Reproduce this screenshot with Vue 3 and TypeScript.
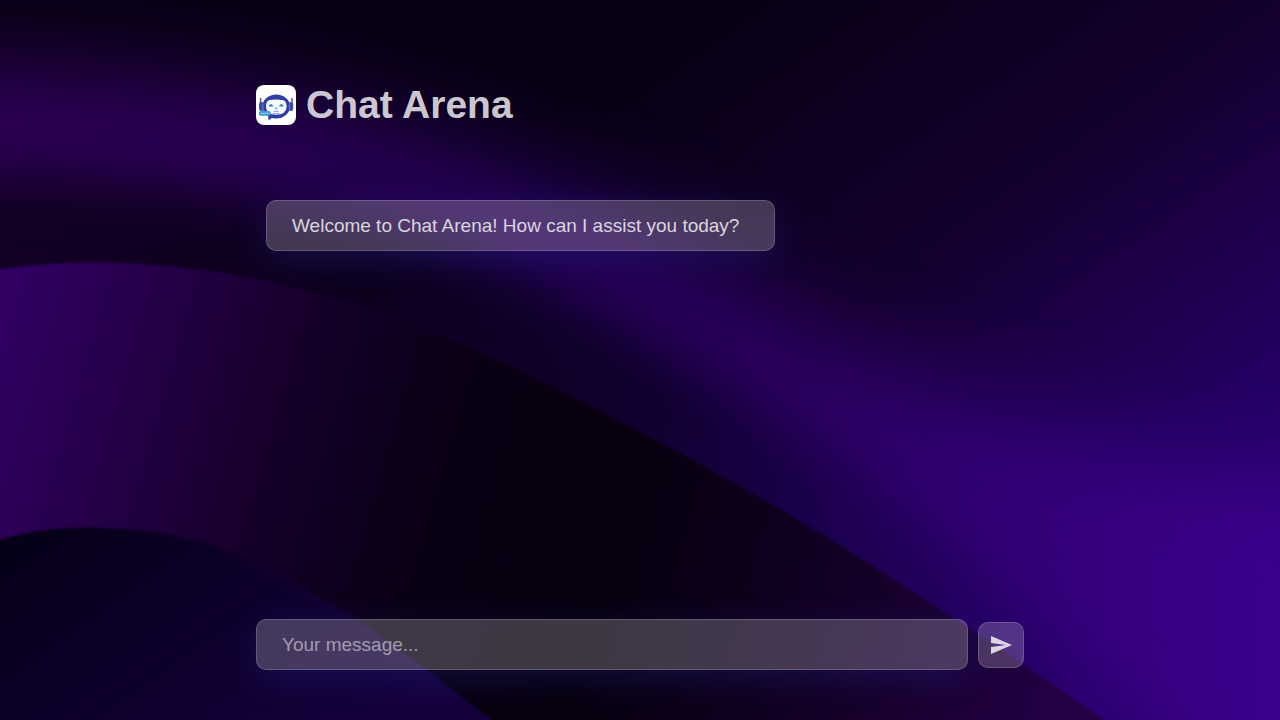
<script setup lang="ts">
import { ref } from 'vue'

interface Message {
  id: number
  text: string
}

const messages = ref<Message[]>([
  { id: 1, text: 'Welcome to Chat Arena! How can I assist you today?' },
])
const draft = ref('')

function send(): void {
  const text = draft.value.trim()
  if (!text) return
  messages.value.push({ id: messages.value.length + 1, text })
  draft.value = ''
}
</script>

<template>
  <div class="app">
    <svg class="backdrop" viewBox="0 0 1280 720" preserveAspectRatio="xMidYMid slice" aria-hidden="true">
      <defs>
        <linearGradient id="sky" gradientUnits="userSpaceOnUse" x1="620" y1="80" x2="1100" y2="760">
          <stop offset="0" stop-color="#080014" />
          <stop offset="0.38" stop-color="#14002d" />
          <stop offset="0.75" stop-color="#240064" />
          <stop offset="1" stop-color="#330082" />
        </linearGradient>
        <linearGradient id="ribbon" gradientUnits="userSpaceOnUse" x1="0" y1="0" x2="1280" y2="0">
          <stop offset="0" stop-color="#2f0058" />
          <stop offset="0.4" stop-color="#260059" />
          <stop offset="0.6" stop-color="#2b0060" />
          <stop offset="0.8" stop-color="#330078" />
          <stop offset="1" stop-color="#3c008e" />
        </linearGradient>
        <linearGradient id="trough" gradientUnits="userSpaceOnUse" x1="0" y1="200" x2="1100" y2="720">
          <stop offset="0" stop-color="#140024" />
          <stop offset="0.3" stop-color="#0d001e" />
          <stop offset="0.55" stop-color="#11002e" />
          <stop offset="0.75" stop-color="#1d0052" />
          <stop offset="1" stop-color="#2a0070" />
        </linearGradient>
        <linearGradient id="wave" gradientUnits="userSpaceOnUse" x1="0" y1="340" x2="1070" y2="650">
          <stop offset="0" stop-color="#300062" />
          <stop offset="0.12" stop-color="#250048" />
          <stop offset="0.26" stop-color="#16002a" />
          <stop offset="0.42" stop-color="#0a0014" />
          <stop offset="0.58" stop-color="#07000f" />
          <stop offset="0.78" stop-color="#130024" />
          <stop offset="1" stop-color="#230044" />
        </linearGradient>
        <linearGradient id="front" gradientUnits="userSpaceOnUse" x1="60" y1="520" x2="260" y2="800">
          <stop offset="0" stop-color="#070019" />
          <stop offset="0.5" stop-color="#0e002c" />
          <stop offset="1" stop-color="#16003c" />
        </linearGradient>
        <filter id="soft" filterUnits="userSpaceOnUse" x="-300" y="-200" width="2000" height="1300" color-interpolation-filters="sRGB">
          <feGaussianBlur stdDeviation="44" />
        </filter>
        <filter id="softer" filterUnits="userSpaceOnUse" x="-300" y="-200" width="2000" height="1300" color-interpolation-filters="sRGB">
          <feGaussianBlur stdDeviation="30" />
        </filter>
        <filter id="edge" filterUnits="userSpaceOnUse" x="-200" y="-200" width="1700" height="1200" color-interpolation-filters="sRGB">
          <feGaussianBlur stdDeviation="1" />
        </filter>
      </defs>
      <rect width="1280" height="720" fill="url(#sky)" />
      <path
        d="M-300 62C60 54 220 78 370 118C550 164 680 236 800 320C930 400 1060 450 1600 570V1100H1200C1040 800 920 620 780 510C640 400 520 290 370 245C240 205 60 190 -300 190Z"
        fill="url(#ribbon)" filter="url(#soft)"
      />
      <path
        d="M-300 192C60 186 240 212 390 245C530 279 650 338 760 410C880 490 1030 610 1230 800H-300Z"
        fill="url(#trough)" filter="url(#softer)"
      />
      <path
        d="M-40 276C30 262 90 260 140 264C240 270 330 292 420 328C500 358 570 395 640 432C700 464 750 491 800 521C860 557 910 590 960 622C1010 655 1060 688 1160 760H-40Z"
        fill="url(#wave)" filter="url(#edge)"
      />
      <path
        d="M-40 552C20 530 60 527 100 528C180 530 230 547 290 580C370 623 430 670 540 760H-40Z"
        fill="url(#front)" filter="url(#edge)"
      />
    </svg>

    <main class="chat">
      <header class="header">
        <svg class="logo" viewBox="0 0 40 40" aria-hidden="true">
          <rect width="40" height="40" fill="#fff" />
          <path d="M4.6 13.5V20M36 13.5V20" stroke="#4450ab" stroke-width="1.4" stroke-linecap="round" />
          <rect x="3" y="17" width="4.6" height="9" rx="2.2" fill="#3d4aa8" />
          <rect x="32.6" y="17" width="4.6" height="9" rx="2.2" fill="#3d4aa8" />
          <ellipse cx="20.2" cy="21.4" rx="13.8" ry="12" fill="#303da6" />
          <path d="M12 30.5L12.8 35.4L17.5 31.5Z" fill="#303da6" />
          <path d="M7 18.5V25M33.4 18.5V25" stroke="#aab2e0" stroke-width="0.5" />
          <path d="M13 15.2Q20 14 27.4 15.2Q30.6 16.4 30.6 22Q30 29.8 20.2 29.8Q10.4 29.8 10 22Q9.9 16.4 13 15.2Z" fill="#f8fbff" />
          <path d="M12.4 21.4Q15 16.4 17.6 21.4ZM22.8 21.4Q25.4 16.4 28 21.4Z" fill="#367fc5" />
          <path d="M18.4 22.8H21.8L20.1 24.6Z" fill="#4b8fd0" />
          <path d="M17.4 26.4H22.8M16.8 28.4H23.4" stroke="#86a0ca" stroke-width="0.9" />
          <rect x="3" y="26" width="11.6" height="4.8" rx="1.6" fill="#429bd8" />
          <path d="M4.8 28.4H12.8" stroke="#a5d5f2" stroke-width="1.1" stroke-dasharray="1.4 0.6" />
        </svg>
        <h1 class="title">Chat Arena</h1>
      </header>

      <ul class="messages" aria-live="polite">
        <li v-for="message in messages" :key="message.id" class="message glass">{{ message.text }}</li>
      </ul>

      <form class="composer" @submit.prevent="send">
        <input v-model="draft" class="field glass" type="text" placeholder="Your message..." aria-label="Your message" />
        <button class="send" type="submit" aria-label="Send message">
          <svg viewBox="0 0 24 24" width="24" height="24" aria-hidden="true">
            <path d="M2 21L23 12 2 3V10L17 12 2 14Z" fill="currentColor" />
          </svg>
        </button>
      </form>
    </main>
  </div>
</template>

<style>
body {
  margin: 0;
  background: #07000f;
}
</style>

<style scoped>
.app {
  position: relative;
  display: flex;
  justify-content: center;
  min-height: 100vh;
  overflow: hidden;
  color: rgba(255, 255, 255, 0.8);
  font-family: "Liberation Sans", Arial, sans-serif;
}

.backdrop {
  position: absolute;
  inset: 0;
  width: 100%;
  height: 100%;
}

.chat {
  position: relative;
  box-sizing: border-box;
  display: flex;
  flex-direction: column;
  width: 60%;
  padding: 80px 0 50px;
}

.header {
  display: flex;
  align-items: center;
  gap: 10px;
  height: 50px;
}

.logo {
  width: 40px;
  height: 40px;
  border-radius: 8px;
}

.title {
  margin: 0;
  font-size: 39px;
  line-height: 50px;
}

.messages {
  display: flex;
  flex: 1;
  flex-direction: column;
  align-items: flex-start;
  gap: 20px;
  margin: 0;
  padding: 70px 10px 20px;
  list-style: none;
}

.glass {
  box-sizing: border-box;
  border: 1px solid rgba(255, 255, 255, 0.18);
  border-radius: 10px;
  background: rgba(255, 255, 255, 0.22);
  box-shadow: 0 8px 32px rgba(31, 38, 135, 0.37);
  font-size: 19px;
  line-height: 23px;
}

.message {
  min-width: 68%;
  padding: 13px 25px;
}

.composer {
  display: flex;
  align-items: center;
  gap: 10px;
}

.field {
  flex: 1;
  min-width: 0;
  height: 51px;
  margin: 0;
  padding: 0 25px;
  color: inherit;
  font-family: inherit;
  outline: none;
}

.field::placeholder {
  color: rgba(255, 255, 255, 0.5);
}

.send {
  display: flex;
  align-items: center;
  justify-content: center;
  width: 46px;
  height: 46px;
  padding: 0;
  border: 1px solid rgba(255, 255, 255, 0.18);
  border-radius: 10px;
  background: rgba(255, 255, 255, 0.2);
  color: rgba(255, 255, 255, 0.8);
  cursor: pointer;
}
</style>
